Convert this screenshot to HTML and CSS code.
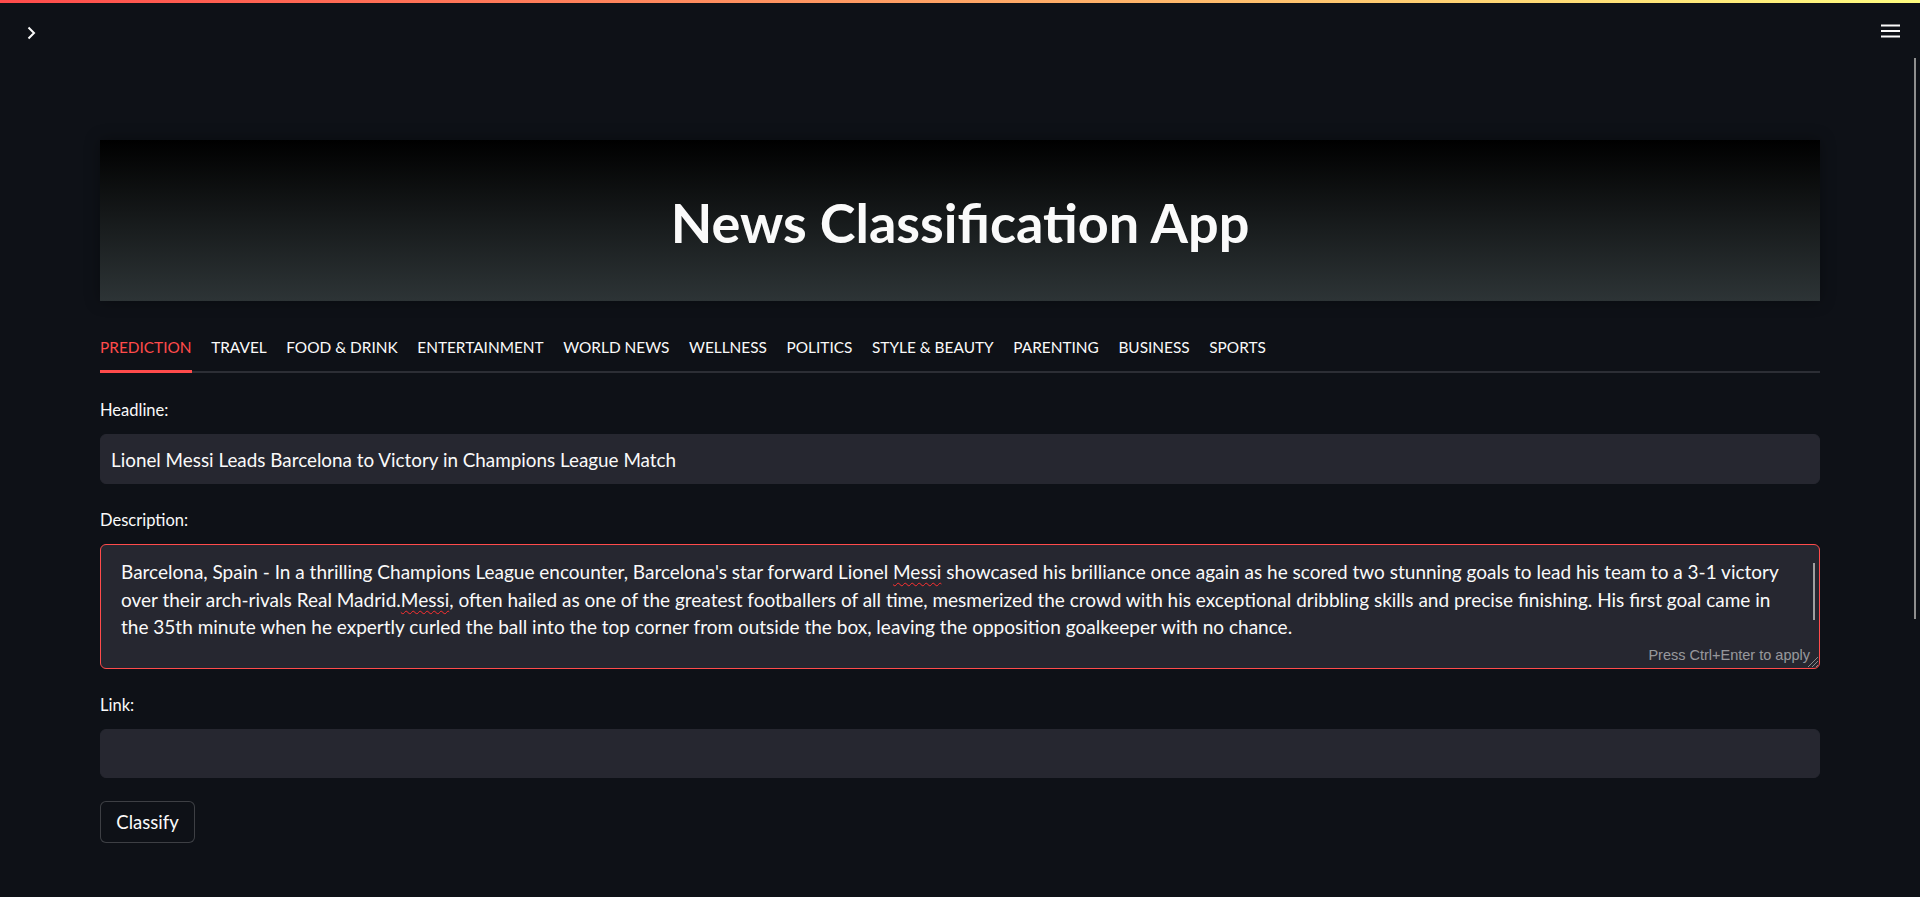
FILE: index.html
```html
<!DOCTYPE html>
<html lang="en">
<head>
<meta charset="utf-8">
<title>News Classification App</title>
<link rel="stylesheet" href="styles.css">
</head>
<body>
<div class="decoration"></div>
<div class="toolbar">
  <button class="icon-btn sidebar-toggle" aria-label="Open sidebar">
    <svg width="12" height="14" viewBox="0 0 12 14"><path d="M2.5 1.5 L8 7 L2.5 12.5" fill="none" stroke="#fafafa" stroke-width="2"/></svg>
  </button>
  <button class="icon-btn menu-btn" aria-label="Main menu">
    <svg width="20" height="14" viewBox="0 0 20 14"><path d="M0 1.5 H19 M0 7 H19 M0 12.5 H19" fill="none" stroke="#fafafa" stroke-width="1.8"/></svg>
  </button>
</div>
<div class="page-scroll"></div>

<main class="main">
  <header class="hero">
    <h1 class="hero-title">News Classification App</h1>
  </header>

  <nav class="tabs">
    <span class="tab active">PREDICTION</span>
    <span class="tab">TRAVEL</span>
    <span class="tab">FOOD &amp; DRINK</span>
    <span class="tab">ENTERTAINMENT</span>
    <span class="tab">WORLD NEWS</span>
    <span class="tab">WELLNESS</span>
    <span class="tab">POLITICS</span>
    <span class="tab">STYLE &amp; BEAUTY</span>
    <span class="tab">PARENTING</span>
    <span class="tab">BUSINESS</span>
    <span class="tab">SPORTS</span>
  </nav>

  <section class="form">
    <div class="field">
      <label class="field-label">Headline:</label>
      <div class="input">Lionel Messi Leads Barcelona to Victory in Champions League Match</div>
    </div>
    <div class="field">
      <label class="field-label">Description:</label>
      <div class="textarea">
        <div class="ta-line">Barcelona, Spain - In a thrilling Champions League encounter, Barcelona's star forward Lionel <span class="spell">Messi</span> showcased his brilliance once again as he scored two stunning goals to lead his team to a 3-1 victory</div>
        <div class="ta-line">over their arch-rivals Real Madrid.<span class="spell">Messi</span>, often hailed as one of the greatest footballers of all time, mesmerized the crowd with his exceptional dribbling skills and precise finishing. His first goal came in</div>
        <div class="ta-line">the 35th minute when he expertly curled the ball into the top corner from outside the box, leaving the opposition goalkeeper with no chance.</div>
        <div class="ta-scroll"></div>
        <div class="ta-hint">Press Ctrl+Enter to apply</div>
        <svg class="ta-grip" width="14" height="14" viewBox="0 0 14 14"><path d="M13 3 L3 13 M13 7 L7 13 M13 11 L11 13" stroke="#8a8a8a" stroke-width="1"/></svg>
      </div>
    </div>
    <div class="field">
      <label class="field-label">Link:</label>
      <div class="input input-link"></div>
    </div>
    <div class="actions">
      <button class="btn">Classify</button>
    </div>
  </section>
</main>
</body>
</html>
```

FILE: styles.css
```css
html, body {
  margin: 0;
  padding: 0;
  overflow: hidden;
}

body {
  background: #0e1117;
  color: #fafafa;
  font-family: Lato, "Source Sans Pro", "Noto Sans", sans-serif;
}

.decoration {
  position: fixed;
  top: 0;
  left: 0;
  right: 0;
  height: 3px;
  background: linear-gradient(90deg, #ff4b4b, #fffd80);
  z-index: 10;
}

.toolbar {
  position: fixed;
  top: 0;
  left: 0;
  right: 0;
  height: 60px;
  z-index: 5;
}

.icon-btn {
  position: absolute;
  background: none;
  border: 0;
  padding: 0;
  display: flex;
}

.sidebar-toggle {
  left: 26px;
  top: 26px;
}

.menu-btn {
  left: 1881px;
  top: 24px;
}

.page-scroll {
  position: fixed;
  left: 1914px;
  top: 58px;
  width: 2px;
  height: 561px;
  background: #8e8e8e;
}

.main {
  padding: 140px 100px 20px 100px;
}

.hero {
  height: 161px;
  background: linear-gradient(180deg, #000000 0%, #2d3436 100%);
  box-shadow: 0 0 14px rgba(0, 0, 0, 0.35);
  display: flex;
  align-items: center;
  justify-content: center;
  padding-top: 4px;
  box-sizing: border-box;
}

.hero-title {
  margin: 0;
  font-size: 54px;
  font-weight: 700;
  color: #fafafa;
  letter-spacing: 0;
}

.tabs {
  margin-top: 21px;
  height: 49px;
  display: flex;
  gap: 19.6px;
  border-bottom: 2px solid #2c2e35;
}

.tab {
  position: relative;
  display: flex;
  align-items: center;
  font-size: 15.4px;
  color: #fafafa;
  white-space: nowrap;
}

.tab.active {
  color: #ff4b4b;
}

.tab.active::after {
  content: "";
  position: absolute;
  left: 0;
  right: 0;
  bottom: -2px;
  height: 3px;
  background: #ff4b4b;
}

.form {
  margin-top: 24px;
  display: flex;
  flex-direction: column;
  gap: 23px;
}

.field {
  display: flex;
  flex-direction: column;
  gap: 11px;
}

.field-label {
  font-size: 16.5px;
  line-height: 26px;
  color: #fafafa;
}

.input {
  height: 50px;
  box-sizing: border-box;
  background: #262730;
  border: 1px solid #262730;
  border-radius: 6px;
  padding: 0 10px;
  display: flex;
  align-items: center;
  font-size: 18.85px;
  color: #fafafa;
  white-space: nowrap;
}

.input-link {
  height: 49px;
}

.textarea {
  position: relative;
  height: 125px;
  box-sizing: border-box;
  background: #262730;
  border: 1px solid #ff4b4b;
  border-radius: 6px;
  padding: 13px 20px;
  font-size: 19px;
  line-height: 27.5px;
  color: #fafafa;
}

.ta-line {
  white-space: nowrap;
}

.spell {
  text-decoration: underline wavy #ff3030;
  text-decoration-thickness: 1px;
  text-underline-offset: 3px;
  text-decoration-skip-ink: none;
}

.ta-scroll {
  position: absolute;
  right: 4px;
  top: 18px;
  width: 2px;
  height: 57px;
  background: #a0a0a0;
}

.ta-hint {
  position: absolute;
  right: 9px;
  bottom: -1px;
  font-family: "Liberation Sans", Arial, sans-serif;
  font-size: 14.5px;
  color: rgba(250, 250, 250, 0.55);
}

.ta-grip {
  position: absolute;
  right: 0;
  bottom: 0;
}

.actions {
  margin-top: 0;
  display: flex;
}

.btn {
  height: 42px;
  width: 95px;
  box-sizing: border-box;
  background: #0e1117;
  border: 1px solid rgba(250, 250, 250, 0.2);
  border-radius: 6px;
  color: #fafafa;
  font-family: Lato, "Source Sans Pro", sans-serif;
  font-size: 18.5px;
  padding: 0;
}
```
